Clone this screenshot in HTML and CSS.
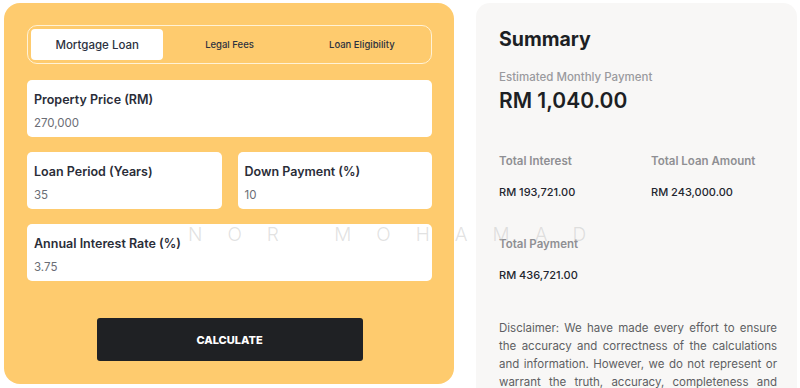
FILE: index.html
```html
<!DOCTYPE html>
<html>
  <head>
    <link rel="stylesheet" href="styles.css">
  </head>
  <body>
    <div class="page">
      <div class="calculator">
        <div class="tabs">
          <button class="tab active">Mortgage Loan</button>
          <button class="tab">Legal Fees</button>
          <button class="tab">Loan Eligibility</button>
        </div>

        <div class="field">
          <label>Property Price (RM)</label>
          <div class="value">270,000</div>
        </div>

        <div class="row">
          <div class="field">
            <label>Loan Period (Years)</label>
            <div class="value">35</div>
          </div>
          <div class="field">
            <label>Down Payment (%)</label>
            <div class="value">10</div>
          </div>
        </div>

        <div class="field">
          <label>Annual Interest Rate (%)</label>
          <div class="value">3.75</div>
        </div>

        <div class="actions">
          <button class="calculate">CALCULATE</button>
        </div>
      </div>

      <div class="summary">
        <h2>Summary</h2>
        <div class="muted">Estimated Monthly Payment</div>
        <div class="monthly">RM 1,040.00</div>

        <div class="totals">
          <div>
            <div class="muted strong">Total Interest</div>
            <div class="amount">RM 193,721.00</div>
          </div>
          <div>
            <div class="muted strong">Total Loan Amount</div>
            <div class="amount">RM 243,000.00</div>
          </div>
          <div>
            <div class="muted strong">Total Payment</div>
            <div class="amount">RM 436,721.00</div>
          </div>
        </div>

        <p class="disclaimer">
          Disclaimer: We have made every effort to ensure the accuracy and
          correctness of the calculations and information. However, we do not
          represent or warrant the truth, accuracy, completeness and
          reliability of any information.
        </p>
      </div>

      <div class="watermark">NOR MOHAMAD</div>
    </div>
  </body>
</html>
```

FILE: styles.css
```css
body {
  margin: 0;
  background-color: #fff;
  font-family: Inter, "Noto Sans", sans-serif;
  color: #23262f;
  overflow: hidden;
}

.page {
  position: relative;
  display: flex;
  gap: 22px;
  padding: 3px 0 0 4px;
  height: 385px;
}

.calculator {
  width: 450px;
  height: 381px;
  box-sizing: border-box;
  background-color: #fecb6e;
  border-radius: 16px;
  padding: 22px 22px 0 23px;
  display: flex;
  flex-direction: column;
  gap: 15px;
}

.tabs {
  display: flex;
  height: 39px;
  box-sizing: border-box;
  border: 1px solid #fff2d6;
  border-radius: 10px;
  padding: 3px;
  margin-bottom: 1px;
}

.tab {
  flex: 1;
  border: none;
  background: none;
  border-radius: 4px;
  font-family: inherit;
  font-size: 9.5px;
  font-weight: 500;
  color: #2c3140;
  cursor: pointer;
}

.tab.active {
  background-color: #fff;
  font-size: 11.5px;
}

.field {
  background-color: #fff;
  border-radius: 5px;
  height: 57px;
  box-sizing: border-box;
  padding: 12px 7px 0;
}

.field label {
  display: block;
  font-size: 12.5px;
  font-weight: 600;
  color: #2a2d38;
}

.field .value {
  margin-top: 9px;
  font-size: 11.5px;
  color: #6b6d75;
}

.row {
  display: flex;
  gap: 16px;
}

.row .field {
  flex: 1;
}

.actions {
  display: flex;
  justify-content: center;
  margin-top: 22px;
}

.calculate {
  width: 266px;
  height: 43px;
  border: none;
  border-radius: 3px;
  background-color: #1f2124;
  color: #fff;
  font-family: inherit;
  font-size: 11px;
  font-weight: 800;
  cursor: pointer;
}

.summary {
  width: 321px;
  height: 385px;
  overflow: hidden;
  box-sizing: border-box;
  background-color: #f8f7f6;
  border-radius: 14px 14px 0 0;
  padding: 24px 20px 0 23px;
}

.summary h2 {
  margin: 0;
  font-size: 19.5px;
  font-weight: 700;
  color: #1d1f24;
}

.muted {
  margin-top: 19px;
  font-size: 11.5px;
  font-weight: 500;
  color: #9a9a9e;
}

.muted.strong {
  margin-top: 0;
  font-weight: 600;
  color: #8f8f93;
}

.monthly {
  margin-top: 4px;
  font-size: 21px;
  font-weight: 600;
  color: #1d1f24;
}

.totals {
  display: grid;
  grid-template-columns: 152px 1fr;
  row-gap: 38px;
  margin-top: 41px;
}

.amount {
  margin-top: 17px;
  font-size: 11px;
  font-weight: 500;
  color: #23262f;
}

.disclaimer {
  margin: 37px 0 0;
  font-size: 11.5px;
  line-height: 18px;
  text-align: justify;
  color: #5e5f63;
}

.watermark {
  position: absolute;
  left: 188px;
  top: 223px;
  font-size: 19px;
  font-weight: 300;
  letter-spacing: 25px;
  color: rgba(190, 190, 190, 0.45);
  pointer-events: none;
}
```
